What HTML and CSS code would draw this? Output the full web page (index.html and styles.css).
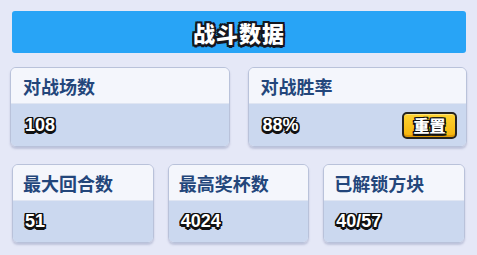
FILE: index.html
```html
<!DOCTYPE html>
<html lang="zh-CN">
<head>
  <meta charset="UTF-8" />
  <meta name="viewport" content="width=device-width, initial-scale=1.0" />
  <title>战斗数据</title>
  <link rel="stylesheet" href="styles.css">
</head>
<body>
  <div class="panel">
    <div class="panel-header">
      <h1 class="panel-title">战斗数据</h1>
    </div>

    <div class="stats-row stats-row-top">
      <div class="stat-card">
        <div class="stat-label">对战场数</div>
        <div class="stat-body">
          <span class="stat-value">108</span>
        </div>
      </div>
      <div class="stat-card">
        <div class="stat-label">对战胜率</div>
        <div class="stat-body">
          <span class="stat-value">88%</span>
          <button class="reset-btn">重置</button>
        </div>
      </div>
    </div>

    <div class="stats-row stats-row-bottom">
      <div class="stat-card">
        <div class="stat-label">最大回合数</div>
        <div class="stat-body">
          <span class="stat-value">51</span>
        </div>
      </div>
      <div class="stat-card">
        <div class="stat-label">最高奖杯数</div>
        <div class="stat-body">
          <span class="stat-value">4024</span>
        </div>
      </div>
      <div class="stat-card">
        <div class="stat-label">已解锁方块</div>
        <div class="stat-body">
          <span class="stat-value">40/57</span>
        </div>
      </div>
    </div>
  </div>
</body>
</html>
```

FILE: styles.css
```css
html, body {
  margin: 0;
  padding: 0;
}
body {
  width: 477px;
  height: 255px;
  background: #e5e8f7;
  font-family: "Noto Sans CJK SC", "Noto Sans", sans-serif;
  overflow: hidden;
}
.panel {
  padding-top: 11px;
}
.panel-header {
  margin: 0 11px 0 12px;
  height: 42px;
  background: #28a4f6;
  border-radius: 3px;
  display: flex;
  justify-content: center;
  align-items: center;
}
.panel-title {
  margin: 0;
  font-size: 22px;
  font-weight: 900;
  color: #fff;
  letter-spacing: 1px;
  text-shadow:
    -2px -2px 0 #14161f, 2px -2px 0 #14161f, -2px 2px 0 #14161f, 2px 2px 0 #14161f,
    0 -2px 0 #14161f, 0 2px 0 #14161f, -2px 0 0 #14161f, 2px 0 0 #14161f,
    0 3px 0 #14161f;
}
.stats-row {
  display: grid;
}
.stats-row-top {
  grid-template-columns: 1fr 1fr;
  gap: 18px;
  padding: 0 10px;
  margin-top: 14px;
}
.stats-row-bottom {
  grid-template-columns: 1fr 1fr 1fr;
  gap: 14px;
  padding: 0 12px;
  margin-top: 17px;
}
.stat-card {
  border: 1px solid #b9c2da;
  border-radius: 6px;
  overflow: hidden;
  box-shadow: 0 2px 2px rgba(120, 130, 170, 0.35);
}
.stat-label {
  height: 35px;
  background: #f4f6fc;
  border-bottom: 1px solid #dfe5f2;
  display: flex;
  align-items: center;
  padding-left: 12px;
  font-size: 18px;
  font-weight: 700;
  color: #23467b;
}
.stats-row-bottom .stat-label {
  padding-left: 10px;
}
.stat-body {
  height: 42px;
  background: #cbd8ef;
  display: flex;
  align-items: center;
  justify-content: space-between;
  padding: 0 9px 0 14px;
}
.stats-row-bottom .stat-body {
  height: 41px;
  padding-left: 12px;
}
.stat-value {
  font-family: "Liberation Sans", Arial, sans-serif;
  font-size: 18px;
  font-weight: 700;
  color: #fff;
  text-shadow:
    -1.5px -1.5px 0 #111, 1.5px -1.5px 0 #111, -1.5px 1.5px 0 #111, 1.5px 1.5px 0 #111,
    0 -1.5px 0 #111, 0 1.5px 0 #111, -1.5px 0 0 #111, 1.5px 0 0 #111,
    0 2.5px 0 #111;
}
.reset-btn {
  width: 55px;
  height: 27px;
  border: 2px solid #26241f;
  border-radius: 5px;
  background: linear-gradient(#ffd431, #f4b30c);
  box-shadow: inset 0 -2px 0 #e09a05, inset 0 1px 0 #ffe57a;
  font-family: "Noto Sans CJK SC", sans-serif;
  font-size: 16px;
  font-weight: 900;
  color: #fff;
  padding: 0;
  line-height: 1;
  text-shadow:
    -1.5px -1.5px 0 #111, 1.5px -1.5px 0 #111, -1.5px 1.5px 0 #111, 1.5px 1.5px 0 #111,
    0 -1.5px 0 #111, 0 1.5px 0 #111, -1.5px 0 0 #111, 1.5px 0 0 #111;
  cursor: pointer;
}
```
